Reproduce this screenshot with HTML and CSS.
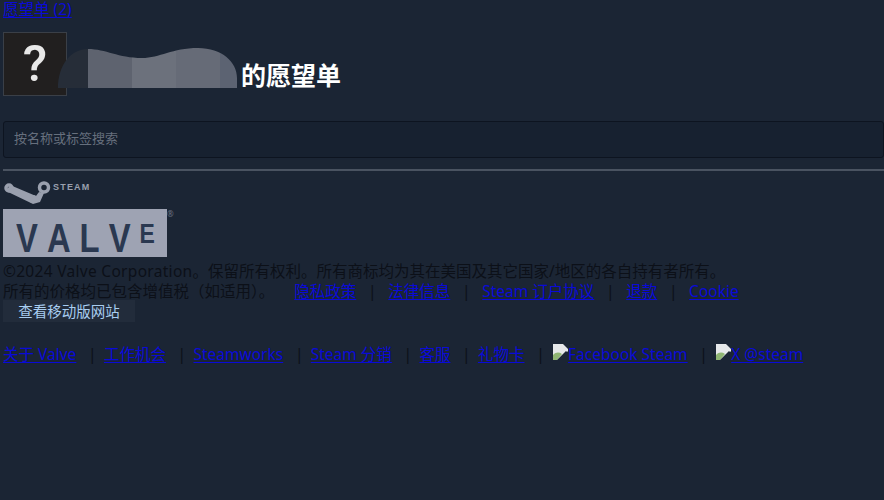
FILE: index.html
```html
<!DOCTYPE html>
<html lang="zh-CN">
<head>
    <meta charset="UTF-8">
    <meta name="viewport" content="width=device-width, initial-scale=1.0">
    <title>的愿望单</title>
    <link rel="stylesheet" href="styles.css">
</head>
<body>
    <div class="crumb"><a href="#">愿望单 (2)</a></div>

    <div class="wishlist-head">
        <div class="avatar">?</div>
        <!-- name is smudged out in the screenshot -->
        <svg class="smudge" width="180" height="64" viewBox="0 0 180 64">
            <defs>
                <clipPath id="blob">
                    <path d="M0 56C0 34 12 17 30 17C48 17 60 26 84 26C102 26 114 16 140 16C164 16 179 30 179 46V56Z"/>
                </clipPath>
            </defs>
            <g clip-path="url(#blob)">
                <rect x="0" y="0" width="30" height="64" fill="#262d38"/>
                <rect x="30" y="0" width="44" height="64" fill="#5e636f"/>
                <rect x="74" y="0" width="44" height="64" fill="#6c717c"/>
                <rect x="118" y="0" width="44" height="64" fill="#666b77"/>
                <rect x="162" y="0" width="18" height="64" fill="#5c6372"/>
            </g>
        </svg>
        <h1>的愿望单</h1>
    </div>

    <input class="search" type="text" placeholder="按名称或标签搜索">
    <hr class="divider">

    <div class="steam-logo">
        <svg width="48" height="24" viewBox="0 0 48 24">
            <path d="M7 4L33 15L36 11L41 12L37 21L30 23L3 10Z" fill="#9aa0ae"/>
            <g fill="none" stroke="#9aa0ae">
                <circle cx="6" cy="7" r="3" stroke-width="3.500"/>
                <circle cx="41" cy="6.500" r="4.500" stroke-width="3.500"/>
                <circle cx="30" cy="18" r="2.500" stroke-width="3"/>
            </g>
        </svg>
        <span class="steam-word">STEAM</span>
    </div>

    <div class="valve-row">
        <div class="valve-logo"><span class="valve-word">VALV<span class="valve-e">E</span></span></div>
        <span class="valve-mark">®</span>
    </div>

    <div class="legal">
        <span class="copy">©2024 Valve Corporation</span>。保留所有权利。所有商标均为其在美国及其它国家/地区的各自持有者所有。<br>
        所有的价格均已包含增值税（如适用）。
        <span class="links">
            <a href="#">隐私政策</a><span class="sep">|</span><a href="#">法律信息</a><span class="sep">|</span><a href="#">Steam 订户协议</a><span class="sep">|</span><a href="#">退款</a><span class="sep">|</span><a href="#">Cookie</a>
        </span>
    </div>

    <div class="mobile-btn">查看移动版网站</div>

    <div class="footer-links">
        <a href="#">关于 Valve</a><span class="sep">|</span>
        <a href="#">工作机会</a><span class="sep">|</span>
        <a href="#">Steamworks</a><span class="sep">|</span>
        <a href="#">Steam 分销</a><span class="sep">|</span>
        <a href="#">客服</a><span class="sep">|</span>
        <a href="#">礼物卡</a><span class="sep">|</span>
        <a href="#"><svg class="broken" width="16" height="16" viewBox="0 0 16 16"><path d="M1 0H11L16 5V7L8 16H1Z" fill="#e6e8ea"/><path d="M1 16V11C4 8 7 8 10 10L5 16Z" fill="#8fb573"/><path d="M5 16L14 7L16 9V16Z" fill="#1b2535"/></svg>Facebook Steam</a><span class="sep">|</span>
        <a href="#"><svg class="broken" width="16" height="16" viewBox="0 0 16 16"><path d="M1 0H11L16 5V7L8 16H1Z" fill="#e6e8ea"/><path d="M1 16V11C4 8 7 8 10 10L5 16Z" fill="#8fb573"/><path d="M5 16L14 7L16 9V16Z" fill="#1b2535"/></svg>X @steam</a>
    </div>
</body>
</html>
```

FILE: styles.css
```css
html, body {
    height: 100%;
}
body {
    margin: 0;
    padding: 0 0 0 3px;
    background-color: #1b2534;
    color: #0c1018;
    font-family: "Noto Sans", "Noto Sans CJK SC", sans-serif;
    font-size: 15.500px;
    line-height: 20px;
    overflow: hidden;
}
a {
    color: #0a0ad8;
    text-decoration-thickness: 1px;
    text-underline-offset: 2px;
}
.crumb {
    height: 32px;
    line-height: 18px;
}
.wishlist-head {
    display: flex;
    align-items: center;
    height: 64px;
}
.avatar {
    flex-shrink: 0;
    width: 64px;
    height: 64px;
    box-sizing: border-box;
    border: 1px solid #3a3f47;
    background-color: #211f1f;
    color: #e8e8e8;
    font-family: Roboto, sans-serif;
    font-size: 50px;
    font-weight: 500;
    line-height: 62px;
    text-align: center;
}
.smudge {
    margin-left: -9px;
    flex-shrink: 0;
}
h1 {
    margin: 22px 0 0 3px;
    color: #ffffff;
    font-size: 25px;
    line-height: 30px;
}
.search {
    display: block;
    width: 100%;
    height: 37px;
    box-sizing: border-box;
    margin-top: 25px;
    padding: 0 10px 4px;
    background-color: #172130;
    border: 1px solid #0d1420;
    border-radius: 3px;
    font-family: inherit;
    font-size: 13px;
    outline: none;
}
.search::placeholder {
    color: #666f7d;
}
.divider {
    height: 2px;
    margin: 11px 0 0 0;
    border: none;
    background-color: #4a5361;
}
.steam-logo {
    display: flex;
    align-items: center;
    gap: 2px;
    height: 24px;
    margin-top: 10px;
}
.steam-word {
    color: #9aa0ae;
    font-family: "Liberation Sans", sans-serif;
    font-size: 9px;
    font-weight: bold;
    letter-spacing: 1.200px;
    margin-top: -13px;
}
.valve-row {
    display: flex;
    margin-top: 4px;
}
.valve-logo {
    width: 164px;
    height: 48px;
    box-sizing: border-box;
    padding-left: 13px;
    background-color: #9ea3b3;
    color: #2a3850;
    font-family: "Liberation Sans", sans-serif;
    font-size: 40px;
    font-weight: bold;
    line-height: 49px;
    white-space: nowrap;
}
.valve-word {
    display: inline-block;
    letter-spacing: 11px;
    font-kerning: none;
    transform: scaleX(0.820);
    transform-origin: left center;
}
.valve-e {
    font-size: 28px;
    vertical-align: 9px;
}
.valve-mark {
    color: #6d7484;
    font-size: 8px;
    line-height: 10px;
}
.legal {
    margin-top: 4px;
}
.copy {
    letter-spacing: 0.300px;
}
.links {
    margin-left: 16px;
}
.sep {
    margin: 0 11.700px;
}
.mobile-btn {
    width: 132px;
    height: 22px;
    margin-top: -1px;
    background-color: #222c3b;
    color: #a8cdf0;
    font-size: 14.500px;
    line-height: 22px;
    text-align: center;
}
.footer-links {
    margin-top: 22px;
}
.footer-links .sep {
    margin: 0 3.300px 0 11.700px;
}
.broken {
    vertical-align: 0;
}
```
